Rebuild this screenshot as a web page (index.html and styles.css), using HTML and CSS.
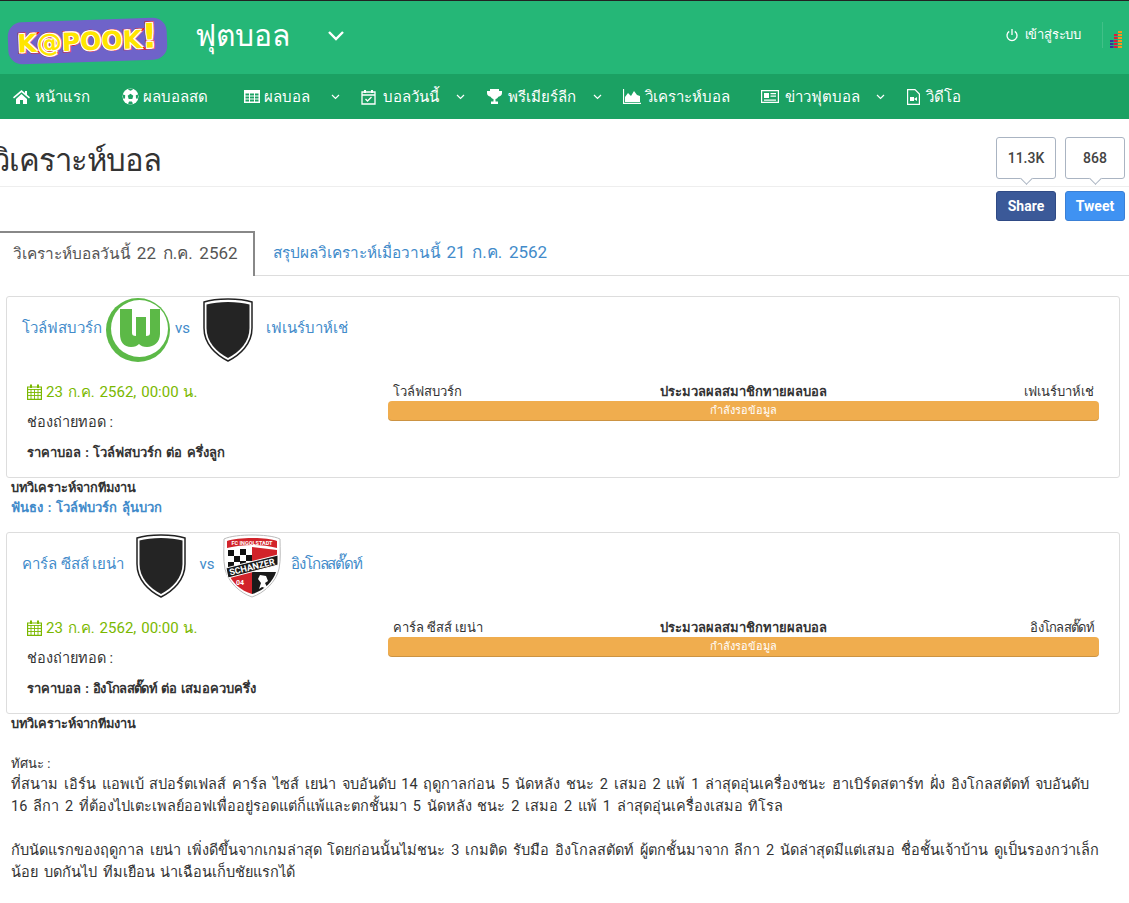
FILE: index.html
```html
<!DOCTYPE html>
<html>
<head>
    <title>วิเคราะห์บอล</title>
    <link rel="stylesheet" href="styles.css">
</head>
<body>
    <div class="topbar">
        <div class="logo"><span class="logo-text">K@POOK<span class="logo-bang">!</span></span></div>
        <div class="section-name">ฟุตบอล</div>
        <svg class="section-arrow" width="18" height="11" viewBox="0 0 18 11"><path d="M2 2l7 7 7-7" fill="none" stroke="#fff" stroke-width="2.4"/></svg>
        <div class="topbar-right">
            <svg class="power" width="12" height="14" viewBox="0 0 12 14"><path d="M3.2 3.4a5 5 0 1 0 5.600 0" fill="none" stroke="#fff" stroke-width="1.300"/><path d="M6 1v6" stroke="#fff" stroke-width="1.300"/></svg>
            <span class="login">เข้าสู่ระบบ</span>
            <div class="stat-icon">
                <svg width="12" height="17" viewBox="0 0 12 17">
                    <rect x="8" y="0" width="4" height="2" fill="#f7941d"/><rect x="8" y="3" width="4" height="2" fill="#f7941d"/><rect x="8" y="6" width="4" height="2" fill="#f7941d"/><rect x="8" y="9" width="4" height="2" fill="#f7941d"/><rect x="8" y="12" width="4" height="2" fill="#f7941d"/><rect x="8" y="15" width="4" height="2" fill="#f7941d"/>
                    <rect x="4" y="3" width="3.500" height="2" fill="#e0183c"/><rect x="4" y="6" width="3.500" height="2" fill="#e0183c"/><rect x="4" y="9" width="3.500" height="2" fill="#e0183c"/><rect x="4" y="12" width="3.500" height="2" fill="#e0183c"/><rect x="4" y="15" width="3.500" height="2" fill="#e0183c"/>
                    <rect x="0" y="9" width="3.500" height="2" fill="#3f2f9e"/><rect x="0" y="12" width="3.500" height="2" fill="#3f2f9e"/><rect x="0" y="15" width="3.500" height="2" fill="#3f2f9e"/>
                </svg>
            </div>
        </div>
    </div>

    <div class="navbar">
        <a class="nav-item w-home"><svg width="17" height="14" viewBox="0 0 17 14"><path d="M8.500 0L0 7.200l1 1.200L8.500 2.200 16 8.400l1-1.200-3-2.500V1h-2v2L8.500 0zM3 9v5h4V10h3v4h4V9L8.500 4 3 9z" fill="#fff"/></svg>หน้าแรก</a>
        <a class="nav-item w-live"><svg width="17" height="17" viewBox="0 0 17 17"><circle cx="8.500" cy="8.500" r="8" fill="#fff"/><path d="M8.500 5.800l2.800 2-1 3.200H6.700l-1-3.200zM6 1.500l2.500 1.300L11 1.500 10 .8H7zM1.200 6.500l2 .8-.2 3-1.300.7-.9-2.500zM15.800 6.500l-2 .8.200 3 1.300.7.900-2.500zM6 15.500l1.200-2h2.600l1.200 2-2.500.9z" fill="#1ba163"/></svg>ผลบอลสด</a>
        <a class="nav-item w-result"><svg width="16" height="13" viewBox="0 0 16 13"><path d="M0 0h16v13H0z" fill="#fff"/><path d="M1.500 3.500h3.500v2H1.500zM6 3.500h4v2H6zM11 3.500h3.500v2H11zM1.500 6.500h3.500v2H1.500zM6 6.500h4v2H6zM11 6.500h3.500v2H11zM1.500 9.500h3.500v2H1.500zM6 9.500h4v2H6zM11 9.500h3.500v2H11z" fill="#1ba163"/></svg>ผลบอล</a>
        <svg class="caret" width="9" height="6" viewBox="0 0 9 6"><path d="M1 1l3.500 3.500L8 1" fill="none" stroke="#fff" stroke-width="1.200"/></svg>
        <a class="nav-item w-today"><svg width="15" height="16" viewBox="0 0 15 16"><path d="M1 3h13v12H1zM1 6h13" fill="none" stroke="#fff" stroke-width="1.300"/><path d="M4 1v3M11 1v3" stroke="#fff" stroke-width="2"/><path d="M4.500 10l2 2 4-4" fill="none" stroke="#fff" stroke-width="1.300"/></svg>บอลวันนี้</a>
        <svg class="caret" width="9" height="6" viewBox="0 0 9 6"><path d="M1 1l3.500 3.500L8 1" fill="none" stroke="#fff" stroke-width="1.200"/></svg>
        <a class="nav-item w-premier"><svg width="15" height="15" viewBox="0 0 15 15"><path d="M3 0h9v2h3v2c0 2-1.500 3.500-3.600 3.700C10.800 9 9.700 9.700 8.500 10v2.500H11V15H4v-2.500h2.500V10C5.300 9.700 4.200 9 3.600 7.700 1.500 7.500 0 6 0 4V2h3z" fill="#fff"/></svg>พรีเมียร์ลีก</a>
        <svg class="caret" width="9" height="6" viewBox="0 0 9 6"><path d="M1 1l3.500 3.500L8 1" fill="none" stroke="#fff" stroke-width="1.200"/></svg>
        <a class="nav-item w-analysis"><svg width="18" height="15" viewBox="0 0 18 15"><path d="M.5 0v14.300H18" fill="none" stroke="#fff" stroke-width="1.200"/><path d="M2 13V8l3-4 3 3 3-5 3 4 3 1v6z" fill="#fff"/></svg>วิเคราะห์บอล</a>
        <a class="nav-item w-news"><svg width="18" height="13" viewBox="0 0 18 13"><path d="M.6.6h16.800v11.800H.6z" fill="none" stroke="#fff" stroke-width="1.200"/><path d="M3 3h5v5H3zM9.500 3H15v1.200H9.500zM9.500 5.500H15v1.200H9.500zM3 9.500h12v1.200H3z" fill="#fff"/></svg>ข่าวฟุตบอล</a>
        <svg class="caret" width="9" height="6" viewBox="0 0 9 6"><path d="M1 1l3.500 3.500L8 1" fill="none" stroke="#fff" stroke-width="1.200"/></svg>
        <a class="nav-item w-video"><svg width="13" height="16" viewBox="0 0 13 16"><path d="M.6.6h7.400l4.400 4.400v10.400H.6z" fill="none" stroke="#fff" stroke-width="1.200"/><path d="M3 8h4v4H3zM7 10l3-2v4z" fill="#fff"/></svg>วิดีโอ</a>
    </div>

    <div class="title-row">
        <h1>วิเคราะห์บอล</h1>
        <div class="shares">
            <div class="share-col">
                <div class="count">11.3K</div>
                <div class="btn btn-fb">Share</div>
            </div>
            <div class="share-col">
                <div class="count">868</div>
                <div class="btn btn-tw">Tweet</div>
            </div>
        </div>
    </div>

    <div class="tabs">
        <div class="tab active">วิเคราะห์บอลวันนี้ <span class="tab-date">22 ก.ค. 2562</span></div>
        <div class="tab">สรุปผลวิเคราะห์เมื่อวานนี้ <span class="tab-date">21 ก.ค. 2562</span></div>
    </div>

    <div class="match">
        <div class="teams">
            <span class="team-name">โวล์ฟสบวร์ก</span>
            <svg class="wob" width="66" height="66" viewBox="0 0 66 66">
                <circle cx="33" cy="33" r="32" fill="#5cb947"/>
                <circle cx="34.500" cy="31.500" r="28.500" fill="#fff"/>
                <path d="M15 12h12v24c0 2 1 3 4 3V20h10v19c3 0 4-1 4-3V12h10v25c0 8-6 13-13 13-4 0-6-1-8-3-2 2-4 3-8 3-7 0-11-5-11-13z" fill="#5cb947"/>
            </svg>
            <span class="vs">vs</span>
            <svg class="shield-gap" width="52" height="64" viewBox="0 0 52 64">
                <path d="M26 1C17 1 8 2 2 4v26c0 16 12 27 24 33 12-6 24-17 24-33V4C44 2 35 1 26 1z" fill="#fff" stroke="#222" stroke-width="1.500"/>
                <path d="M26 4C18 4 10 5 4.500 6.500V30c0 14 10 24 21.500 30C37.500 54 47.500 44 47.500 30V6.500C42 5 34 4 26 4z" fill="#242424"/>
            </svg>
            <span class="team-name">เฟเนร์บาห์เช่</span>
        </div>
        <div class="match-body">
            <div class="match-info">
                <div class="match-date"><svg class="cal" width="15" height="16" viewBox="0 0 15 16"><path d="M.6 3h13.800v12.400H.6z" fill="none" stroke="#7ab800" stroke-width="1.200"/><path d="M1 5.500h13M1 8.500h13M1 11.500h13M4 5v10M7.500 5v10M11 5v10" stroke="#7ab800" stroke-width=".9"/><path d="M4 .5v3.500M11 .5v3.500" stroke="#7ab800" stroke-width="2"/></svg>23 ก.ค. 2562, 00:00 น.</div>
                <div class="match-line">ช่องถ่ายทอด :</div>
                <div class="match-line match-price">ราคาบอล : โวล์ฟสบวร์ก ต่อ ครึ่งลูก</div>
            </div>
            <div class="poll">
                <div class="poll-head"><span>โวล์ฟสบวร์ก</span><b>ประมวลผลสมาชิกทายผลบอล</b><span class="poll-away">เฟเนร์บาห์เช่</span></div>
                <div class="poll-bar">กำลังรอข้อมูล</div>
            </div>
        </div>
    </div>
    <div class="review">
        <div class="review-title">บทวิเคราะห์จากทีมงาน</div>
        <div class="review-tip">ฟันธง : โวล์ฟบวร์ก ลุ้นบวก</div>
    </div>

    <div class="match second">
        <div class="teams">
            <span class="team-name">คาร์ล ซีสส์ เยน่า</span>
            <svg class="away-gap" width="52" height="64" viewBox="0 0 52 64">
                <path d="M26 1C17 1 8 2 2 4v26c0 16 12 27 24 33 12-6 24-17 24-33V4C44 2 35 1 26 1z" fill="#fff" stroke="#222" stroke-width="1.500"/>
                <path d="M26 4C18 4 10 5 4.500 6.500V30c0 14 10 24 21.500 30C37.500 54 47.500 44 47.500 30V6.500C42 5 34 4 26 4z" fill="#242424"/>
            </svg>
            <span class="vs vs-wide">vs</span>
            <svg class="ingol" width="60" height="64" viewBox="0 0 60 64">
                <path d="M30 1C20 1 8 2 2 5c0 10-1 20 1 30 3 13 15 24 27 28 12-4 24-15 27-28 2-10 1-20 1-30C52 2 40 1 30 1z" fill="#fff" stroke="#bbb"/>
                <path d="M30 4C21 4 10 5 5 7v7c8-2 17-3 25-3s17 1 25 3V7C50 5 39 4 30 4z" fill="#d2232a"/>
                <path d="M5 16l25-3v19L6 38C5 30 5 24 5 16z" fill="#fff"/>
                <path d="M6 16h6v6H6zM18 15h6v6h-6zM12 22h6v6h-6zM24 21h6v6h-6zM6 28h6v6H6zM18 27h6v5h-6z" fill="#111"/>
                <path d="M30 13l25 3c0 4 0 7-1 11l-24 5z" fill="#d2232a"/>
                <path d="M6 38c3 10 13 19 24 22V38z" fill="#d2232a"/>
                <path d="M30 38v22c11-3 21-12 24-22z" fill="#1a1a1a"/>
                <path d="M4 34l52-13 0 10-50 13z" fill="#1a1a1a" stroke="#fff"/>
                <path d="M38 41l6 1 2 5-3 2 3 6-6-2-3 2 2-6-3-4z" fill="#fff"/>
                <text x="30" y="11" class="ingol-top" text-anchor="middle">FC INGOLSTADT</text>
                <text x="30" y="36" class="ingol-band" text-anchor="middle" transform="rotate(-14 30 33)">SCHANZER</text>
                <text x="14" y="51" class="ingol-num">04</text>
            </svg>
            <span class="team-name tighter">อิงโกลสตั๊ดท์</span>
        </div>
        <div class="match-body">
            <div class="match-info">
                <div class="match-date"><svg class="cal" width="15" height="16" viewBox="0 0 15 16"><path d="M.6 3h13.800v12.400H.6z" fill="none" stroke="#7ab800" stroke-width="1.200"/><path d="M1 5.500h13M1 8.500h13M1 11.500h13M4 5v10M7.500 5v10M11 5v10" stroke="#7ab800" stroke-width=".9"/><path d="M4 .5v3.500M11 .5v3.500" stroke="#7ab800" stroke-width="2"/></svg>23 ก.ค. 2562, 00:00 น.</div>
                <div class="match-line">ช่องถ่ายทอด :</div>
                <div class="match-line match-price">ราคาบอล : <span class="tight">อิงโกลสตั๊ดท์</span> ต่อ เสมอควบครึ่ง</div>
            </div>
            <div class="poll">
                <div class="poll-head"><span>คาร์ล ซีสส์ เยน่า</span><b>ประมวลผลสมาชิกทายผลบอล</b><span class="poll-away tight">อิงโกลสตั๊ดท์</span></div>
                <div class="poll-bar">กำลังรอข้อมูล</div>
            </div>
        </div>
    </div>
    <div class="review">
        <div class="review-title">บทวิเคราะห์จากทีมงาน</div>
        <div class="review-label">ทัศนะ :</div>
        <p>ที่สนาม เอิร์น แอพเบ้ สปอร์ตเฟลส์ คาร์ล ไซส์ เยน่า จบอันดับ 14 ฤดูกาลก่อน 5 นัดหลัง ชนะ 2 เสมอ 2 แพ้ 1 ล่าสุดอุ่นเครื่องชนะ ฮาเบิร์ดสตาร์ท ฝั่ง อิงโกลสตัดท์ จบอันดับ 16 ลีกา 2 ที่ต้องไปเตะเพลย์ออฟเพื่ออยู่รอดแต่ก็แพ้และตกชั้นมา 5 นัดหลัง ชนะ 2 เสมอ 2 แพ้ 1 ล่าสุดอุ่นเครื่องเสมอ ทิโรล</p>
        <p>กับนัดแรกของฤดูกาล เยน่า เพิ่งดีขึ้นจากเกมล่าสุด โดยก่อนนั้นไม่ชนะ 3 เกมติด รับมือ อิงโกลสตัดท์ ผู้ตกชั้นมาจาก ลีกา 2 นัดล่าสุดมีแต่เสมอ ชื่อชั้นเจ้าบ้าน ดูเป็นรองกว่าเล็กน้อย บดกันไป ทีมเยือน น่าเฉือนเก็บชัยแรกได้</p>
    </div>
</body>
</html>
```

FILE: styles.css
```css
* {
    box-sizing: border-box;
}

body {
    margin: 0;
    padding: 0;
    width: 1129px;
    height: 903px;
    overflow: hidden;
    background-color: #ffffff;
    font-family: Roboto, "Noto Sans", sans-serif;
    font-size: 14px;
    color: #333;
}

.topbar {
    display: flex;
    align-items: center;
    height: 74px;
    border-top: 1px solid #222;
    background-color: #25b777;
    padding-left: 8px;
    color: #fff;
}

.logo {
    display: flex;
    align-items: center;
    justify-content: center;
    width: 159px;
    height: 42px;
    margin-top: 6px;
    background-color: #6f63c9;
    border-radius: 14px;
    transform: rotate(-2deg);
}

.logo-text {
    font-family: "DejaVu Sans", sans-serif;
    font-weight: bold;
    font-size: 25px;
    letter-spacing: 0;
    color: #ffe600;
    -webkit-text-stroke: 3px #e8160c;
    paint-order: stroke fill;
    text-shadow: 1px 1px 0 #fff, -1px -1px 0 #fff, 1px -1px 0 #fff, -1px 1px 0 #fff;
}

.logo-bang {
    font-size: 34px;
    line-height: 25px;
}

.section-name {
    margin-left: 28px;
    font-size: 30px;
    margin-top: -4px;
}

.section-arrow {
    margin-left: 37px;
    margin-top: -5px;
}

.topbar-right {
    display: flex;
    align-items: center;
    margin-left: auto;
    margin-top: -6px;
}

.power {
    margin-right: -2px;
}

.login {
    margin-left: 9px;
    font-size: 13px;
    letter-spacing: -0.2px;
}

.stat-icon {
    display: flex;
    align-items: flex-end;
    height: 26px;
    margin-left: 21px;
    padding: 0 7px;
    border-left: 1px solid #41c088;
}

.navbar {
    display: flex;
    align-items: center;
    height: 45px;
    padding-left: 13px;
    background-color: #1ba163;
}

.nav-item {
    display: flex;
    align-items: center;
    gap: 6px;
    color: #fff;
    font-size: 15px;
    font-weight: 500;
    white-space: nowrap;
}

.w-home { width: 109px; gap: 5px; }
.w-live { width: 122px; gap: 4px; }
.w-result { width: 87px; gap: 4px; }
.w-today { width: 95px; margin-left: 21px; gap: 7px; }
.w-premier { width: 106px; margin-left: 22px; }
.w-analysis { width: 138px; margin-left: 21px; gap: 4px; }
.w-news { width: 115px; }
.w-video { margin-left: 22px; }

.caret {
    flex-shrink: 0;
}

.title-row {
    display: flex;
    justify-content: space-between;
    height: 112px;
    margin-left: -7px;
    padding-right: 4px;
}

h1 {
    flex: 1;
    height: 48px;
    margin: 20px -133px 0 0;
    font-size: 31px;
    font-weight: 400;
    letter-spacing: -1px;
    line-height: 44px;
    color: #333;
    border-bottom: 1px solid #eee;
}

.shares {
    display: flex;
    gap: 9px;
    padding-top: 18px;
    position: relative;
}

.share-col {
    width: 60px;
}

.count {
    position: relative;
    height: 42px;
    line-height: 40px;
    text-align: center;
    font-size: 14px;
    font-weight: 500;
    color: #444;
    background: #fff;
    border: 1px solid #aab4c2;
    border-radius: 3px;
}

.count::after {
    content: "";
    position: absolute;
    left: 50%;
    bottom: -5px;
    width: 8px;
    height: 8px;
    margin-left: -4px;
    background: #fff;
    border-right: 1px solid #aab4c2;
    border-bottom: 1px solid #aab4c2;
    transform: rotate(45deg);
}

.btn {
    height: 30px;
    margin-top: 12px;
    line-height: 28px;
    text-align: center;
    color: #fff;
    font-size: 14px;
    font-weight: 700;
    border-radius: 3px;
}

.btn-fb {
    background-color: #3b5998;
    border: 1px solid #2f4a85;
}

.btn-tw {
    background-color: #3f92f2;
    border: 1px solid #3a80d6;
}

.tabs {
    display: flex;
    align-items: flex-start;
    height: 45px;
    margin-left: -7px;
    border-bottom: 1px solid #ddd;
    font-size: 15.4px;
}

.tab {
    padding: 0 18px;
    line-height: 42px;
    color: #428bca;
}

.tab-date {
    margin-left: 2px;
    font-size: 17px;
    word-spacing: 2.5px;
}

.active {
    height: 45px;
    padding: 0 15px 0 20px;
    line-height: 40px;
    color: #555;
    background: #fff;
    border-top: 2px solid #888;
    border-right: 2px solid #888;
}

.match {
    height: 182px;
    margin: 20px 9px 0 6px;
    border: 1px solid #ddd;
    border-radius: 3px;
}

.second {
    margin-top: 14px;
}

.teams {
    display: flex;
    align-items: center;
    height: 66px;
    padding-left: 15px;
    color: #428bca;
    font-size: 15px;
}

.team-name,
.vs {
    padding-bottom: 5px;
}

.tight {
    letter-spacing: -0.7px;
}

.tighter {
    letter-spacing: -1.2px;
}

.wob {
    margin-left: 3px;
    margin-top: -1px;
}

.vs {
    margin-left: 4px;
}

.shield-gap {
    margin: 0 12px 0 12px;
}

.away-gap {
    margin: 0 12px 0 11px;
}

.vs-wide {
    margin-left: 0;
    margin-right: 8px;
}

.ingol {
    margin-right: 9px;
}

.ingol-top {
    font-size: 5.5px;
    font-weight: bold;
    fill: #fff;
}

.ingol-band {
    font-size: 9px;
    font-weight: bold;
    fill: #fff;
}

.ingol-num {
    font-size: 7px;
    font-weight: bold;
    fill: #fff;
}

.match-body {
    display: flex;
    padding: 19px 20px 0 20px;
}

.match-info {
    width: 361px;
}

.match-date {
    display: flex;
    align-items: center;
    height: 19px;
    color: #7ab800;
    font-size: 15px;
    word-spacing: 1.2px;
}

.cal {
    margin-right: 4px;
}

.match-line {
    margin-top: 12px;
    height: 19px;
    line-height: 19px;
    font-size: 14.5px;
}

.match-price {
    margin-top: 11px;
    font-weight: 700;
    font-size: 13px;
    word-spacing: 1px;
}

.poll {
    flex: 1;
    font-size: 13px;
}

.poll-head {
    display: grid;
    grid-template-columns: 1fr auto 1fr;
    padding: 0 5px;
    height: 19px;
    line-height: 19px;
}

.poll-away {
    text-align: right;
}

.poll-bar {
    height: 20px;
    line-height: 19px;
    text-align: center;
    font-size: 11px;
    font-weight: 500;
    color: #fff;
    background-color: #f0ad4e;
    border-radius: 4px;
    box-shadow: inset 0 -1px 0 rgba(0, 0, 0, 0.15);
}

.review {
    padding: 0 19px 0 11px;
    line-height: 20px;
}

.review-title {
    font-weight: 700;
    font-size: 12.8px;
}

.review-tip {
    font-weight: 700;
    font-size: 13px;
    word-spacing: 1.5px;
    color: #428bca;
}

.review-label {
    margin-top: 20px;
    font-size: 13px;
}

.review p {
    margin: 0 0 22px;
    font-size: 14.5px;
    word-spacing: 2.2px;
    line-height: 22px;
}
```
